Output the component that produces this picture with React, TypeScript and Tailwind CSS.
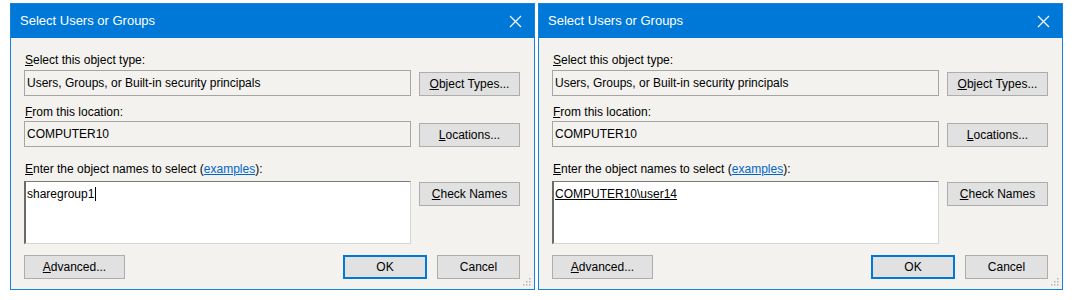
import React from 'react'

const font = { fontFamily: '"Liberation Sans", Arial, sans-serif' }

const Btn = ({ children, className = '', def = false }: { children: React.ReactNode; className?: string; def?: boolean }) => (
  <div className={`flex items-center justify-center h-[24px] bg-[#e1e1e1] text-[12px] text-black ${def ? 'border-2 border-[#0078d7]' : 'border border-[#adadad]'} ${className}`}>{children}</div>
)

const Grip = () => (
  <svg width="8" height="8" viewBox="0 0 8 8" className="absolute right-[3px] bottom-[3px]">
    <rect x="6" y="0" width="1.5" height="1.5" fill="#b5b5b5" />
    <rect x="3" y="3" width="1.5" height="1.5" fill="#b5b5b5" />
    <rect x="6" y="3" width="1.5" height="1.5" fill="#b5b5b5" />
    <rect x="0" y="6" width="1.5" height="1.5" fill="#b5b5b5" />
    <rect x="3" y="6" width="1.5" height="1.5" fill="#b5b5b5" />
    <rect x="6" y="6" width="1.5" height="1.5" fill="#b5b5b5" />
  </svg>
)

const Dialog = ({ names }: { names: React.ReactNode }) => (
  <div className="relative flex flex-col w-[525px] h-[287px] border border-[#1883d7] bg-[#f3f2ee]">
    <div className="flex items-center justify-between h-[34px] bg-[#0078d7] pl-[9px] pr-[12px]">
      <span className="text-white text-[13px]">Select Users or Groups</span>
      <svg width="13" height="13" viewBox="0 0 13 13">
        <path d="M1 1 L12 12 M12 1 L1 12" stroke="#ffffff" strokeWidth="1.2" />
      </svg>
    </div>
    <div className="flex flex-col pl-[13px] text-[12px] leading-4 text-black">
      <div className="mt-[14px] pl-[1px]">
        <u>S</u>elect this object type:
      </div>
      <div className="flex mt-[2px]">
        <div className="flex items-center w-[387px] h-[26px] border border-[#a5a5a5] pl-[2px]">Users, Groups, or Built-in security principals</div>
        <Btn className="w-[101px] ml-[8px] mt-[2px] h-[23px]">
          <span>
            <u>O</u>bject Types...
          </span>
        </Btn>
      </div>
      <div className="mt-[8px] pl-[1px]">
        <u>F</u>rom this location:
      </div>
      <div className="flex mt-[1px]">
        <div className="flex items-center w-[387px] h-[26px] border border-[#a5a5a5] pl-[2px]">COMPUTER10</div>
        <Btn className="w-[101px] ml-[8px] mt-[2px] h-[23px]">
          <span>
            <u>L</u>ocations...
          </span>
        </Btn>
      </div>
      <div className="mt-[14px] pl-[1px]">
        <u>E</u>nter the object names to select (<span className="text-[#0066cc] underline">examples</span>):
      </div>
      <div className="flex mt-[4px]">
        <div className="w-[387px] h-[63px] bg-white border-t border-l-2 border-r border-b border-t-[#7a7a7a] border-l-[#6a6a6a] border-r-[#d5d5d5] border-b-[#d5d5d5] pl-[1px] pt-[4px]">{names}</div>
        <Btn className="w-[101px] ml-[8px] mt-[1px]">
          <span>
            <u>C</u>heck Names
          </span>
        </Btn>
      </div>
      <div className="flex mt-[11px]">
        <Btn className="w-[101px]">
          <span>
            <u>A</u>dvanced...
          </span>
        </Btn>
        <Btn def className="w-[84px] ml-[218px]">OK</Btn>
        <Btn className="w-[83px] ml-[10px]">Cancel</Btn>
      </div>
    </div>
    <Grip />
  </div>
)

export default function App() {
  return (
    <div className="w-[1074px] h-[300px] bg-white flex pl-[10px] pt-[3px] gap-[3px]" style={font}>
      <Dialog
        names={
          <span className="flex items-center">
            sharegroup1<span className="inline-block w-[1px] h-[14px] bg-black ml-[1px]" />
          </span>
        }
      />
      <Dialog names={<span className="underline">COMPUTER10\user14</span>} />
    </div>
  )
}
